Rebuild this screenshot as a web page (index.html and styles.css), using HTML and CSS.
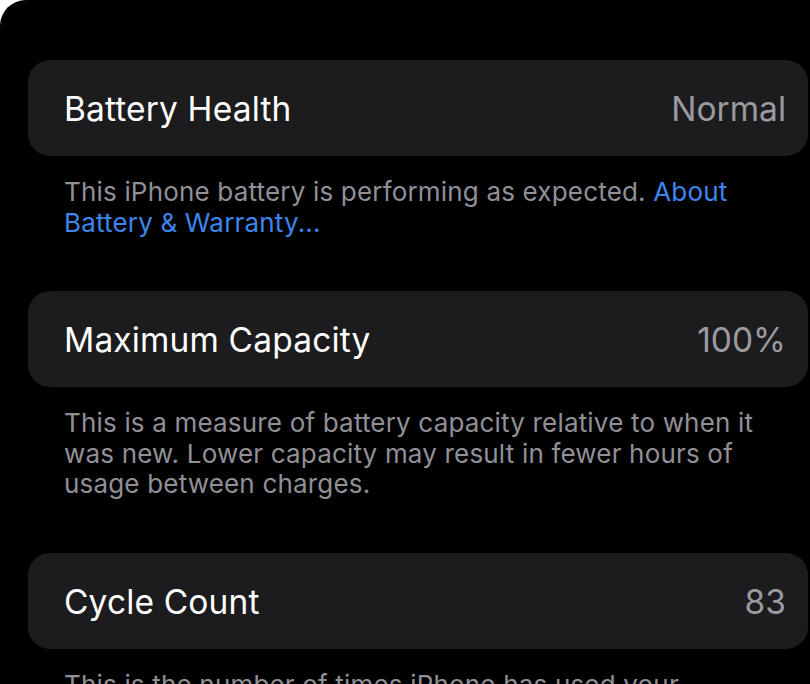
FILE: index.html
```html
<!DOCTYPE html>
<html lang="en">
<head>
<meta charset="utf-8">
<title>Battery Health</title>
<link rel="stylesheet" href="styles.css">
</head>
<body>
<div class="screen">
  <section class="group">
    <div class="card">
      <span class="label">Battery Health</span>
      <span class="value">Normal</span>
    </div>
    <p class="footer">This iPhone battery is performing as expected. <a class="link" href="#">About<br>Battery &amp; Warranty...</a></p>
  </section>
  <section class="group">
    <div class="card">
      <span class="label">Maximum Capacity</span>
      <span class="value">100%</span>
    </div>
    <p class="footer">This is a measure of battery capacity relative to when it<br>was new. Lower capacity may result in fewer hours of<br>usage between charges.</p>
  </section>
  <section class="group">
    <div class="card">
      <span class="label">Cycle Count</span>
      <span class="value">83</span>
    </div>
    <p class="footer">This is the number of times iPhone has used your<br>battery's full capacity.</p>
  </section>
</div>
</body>
</html>
```
FILE: styles.css
```css
html, body {
  margin: 0;
  padding: 0;
  background: #ffffff;
}
body {
  width: 810px;
  height: 684px;
  overflow: hidden;
  font-family: Inter, "Noto Sans", sans-serif;
}
.screen {
  background: #000000;
  height: 684px;
  overflow: hidden;
  border-top-left-radius: 26px;
  padding: 60px 2px 0 28px;
  box-sizing: border-box;
  display: flex;
  flex-direction: column;
  gap: 53px;
}
.card {
  background: #1c1c1e;
  border-radius: 22px;
  height: 96px;
  display: flex;
  align-items: center;
  justify-content: space-between;
  padding: 2px 22px 0 36px;
  box-sizing: border-box;
}
.label {
  color: #ffffff;
  font-size: 33.5px;
  letter-spacing: 0.15px;
}
.value {
  color: #9a9aa0;
  font-size: 33.5px;
}
.footer {
  margin: 21px 0 0 0;
  padding-left: 36px;
  color: #909096;
  font-size: 26px;
  letter-spacing: 0.18px;
  line-height: 30.5px;
  white-space: nowrap;
}
.link {
  color: #3f85ee;
  text-decoration: none;
}
```
